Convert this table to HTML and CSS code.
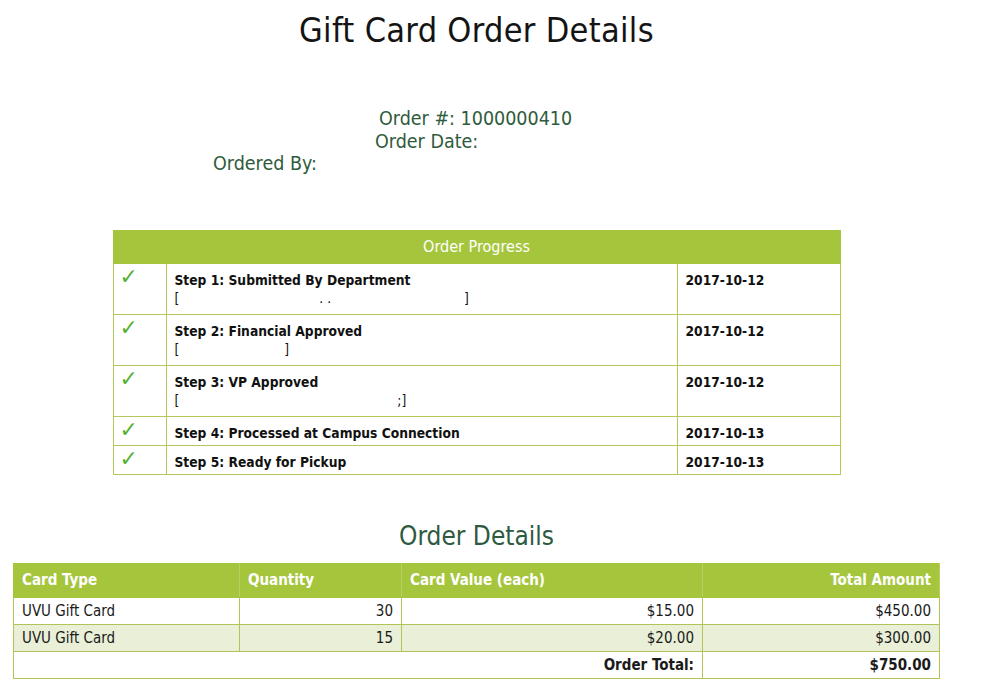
FILE: index.html
```html
<!DOCTYPE html>
<html>
<head>
<meta charset="utf-8">
<link rel="stylesheet" href="styles.css">
</head>
<body>
<div class="page">
  <h1 class="title">Gift Card Order Details</h1>
  <div class="meta">
    <div class="meta-line order-no">Order #: 1000000410</div>
    <div class="meta-line order-date">Order Date:</div>
    <div class="meta-line ordered-by">Ordered By:</div>
  </div>

  <table class="progress">
    <thead>
      <tr><th colspan="3">Order Progress</th></tr>
    </thead>
    <tbody>
      <tr class="tall">
        <td class="chk">&#10003;</td>
        <td class="step">Step 1: Submitted By Department<br><span class="who">[<span class="gap g1"></span>. .<span class="gap g2"></span>]</span></td>
        <td class="date">2017-10-12</td>
      </tr>
      <tr class="tall">
        <td class="chk">&#10003;</td>
        <td class="step">Step 2: Financial Approved<br><span class="who">[<span class="gap g3"></span>]</span></td>
        <td class="date">2017-10-12</td>
      </tr>
      <tr class="tall">
        <td class="chk">&#10003;</td>
        <td class="step">Step 3: VP Approved<br><span class="who">[<span class="gap g4"></span>;]</span></td>
        <td class="date">2017-10-12</td>
      </tr>
      <tr>
        <td class="chk">&#10003;</td>
        <td class="step">Step 4: Processed at Campus Connection</td>
        <td class="date">2017-10-13</td>
      </tr>
      <tr>
        <td class="chk">&#10003;</td>
        <td class="step">Step 5: Ready for Pickup</td>
        <td class="date">2017-10-13</td>
      </tr>
    </tbody>
  </table>

  <h2 class="subtitle">Order Details</h2>

  <table class="details">
    <thead>
      <tr>
        <th class="c1">Card Type</th>
        <th class="c2">Quantity</th>
        <th class="c3">Card Value (each)</th>
        <th class="c4 right">Total Amount</th>
      </tr>
    </thead>
    <tbody>
      <tr>
        <td>UVU Gift Card</td>
        <td class="right">30</td>
        <td class="right">$15.00</td>
        <td class="right">$450.00</td>
      </tr>
      <tr class="alt">
        <td>UVU Gift Card</td>
        <td class="right">15</td>
        <td class="right">$20.00</td>
        <td class="right">$300.00</td>
      </tr>
      <tr class="total">
        <td colspan="3" class="right bold">Order Total:</td>
        <td class="right bold">$750.00</td>
      </tr>
    </tbody>
  </table>
</div>
</body>
</html>
```

FILE: styles.css
```css
html, body {
  margin: 0;
  padding: 0;
  background: #ffffff;
}

body {
  font-family: "DejaVu Sans Condensed", "DejaVu Sans", sans-serif;
  color: #111;
}

.page {
  width: 953px;
  padding-top: 9px;
}

.title {
  margin: 0;
  text-align: center;
  font-family: "DejaVu Sans Condensed", "DejaVu Sans", sans-serif;
  font-weight: normal;
  font-size: 34px;
  line-height: 42px;
  color: #141414;
  letter-spacing: 0.3px;
}

.meta {
  margin-top: 57px;
  font-family: "DejaVu Sans Condensed", "DejaVu Sans", sans-serif;
  font-size: 19.5px;
  line-height: 22.5px;
  color: #2f5b3c;
}

.meta-line {
  white-space: nowrap;
}

.order-no { padding-left: 379px; }
.order-date { padding-left: 375px; }
.ordered-by { padding-left: 213px; }

table {
  border-collapse: collapse;
}

.progress {
  width: 728px;
  margin: 54px auto 0;
  font-size: 13.7px;
}

.progress th {
  background: #a5c63c;
  color: #ffffff;
  font-weight: normal;
  font-size: 16px;
  height: 32px;
  padding: 0;
  border: 1px solid #a5c63c;
  text-align: center;
}

.progress td {
  border: 1px solid #b4c75a;
  vertical-align: top;
  padding: 7px 8px 0;
  height: 21px;
  line-height: 18px;
  font-weight: bold;
  color: #111;
}

.progress tr.tall td {
  height: 43px;
}

.progress td.chk {
  width: 46px;
  padding: 0 0 0 6px;
  font-size: 22px;
  line-height: 26px;
  color: #57b030;
  font-weight: bold;
  font-family: "DejaVu Sans", sans-serif;
}

.progress td.step {
  width: 494px;
}

.progress td.date {
  width: 146px;
}

.who {
  font-weight: normal;
}

.gap {
  display: inline-block;
}
.g1 { width: 140px; }
.g2 { width: 133px; }
.g3 { width: 105px; }
.g4 { width: 218px; }

.subtitle {
  margin: 44px 0 0;
  text-align: center;
  font-family: "DejaVu Sans Condensed", "DejaVu Sans", sans-serif;
  font-weight: normal;
  font-size: 26px;
  line-height: 34px;
  color: #2d5a40;
}

.details {
  width: 927px;
  margin: 10px 0 0 13px;
  font-size: 15px;
}

.details th {
  background: #a5c63c;
  color: #ffffff;
  font-weight: bold;
  font-size: 15px;
  text-align: left;
  height: 33px;
  padding: 0 8px;
  border: 1px solid #a5c63c;
  border-right-color: #b7d062;
}

.details th.c1 { width: 209px; }
.details th.c2 { width: 145px; }
.details th.c3 { width: 284px; }

.details td {
  border: 1px solid #b0c45a;
  height: 26px;
  padding: 0 8px;
  color: #1a1a1a;
}

.details tr.alt td {
  background: #e9f0d7;
}

.right { text-align: right; }
.details th.right { text-align: right; }
.bold { font-weight: bold; }
```
